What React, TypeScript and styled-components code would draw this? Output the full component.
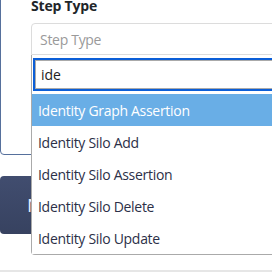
import React, { FC } from 'react';
import styled, { createGlobalStyle } from 'styled-components';

const GlobalStyle = createGlobalStyle`
  html, body {
    margin: 0;
    padding: 0;
    background: #ffffff;
    overflow: hidden;
  }
  body {
    font-family: 'Open Sans', 'Liberation Sans', sans-serif;
  }
`;

const Page = styled.div`
  width: 272px;
  height: 277px;
  overflow: hidden;
  position: relative;
`;

/* the view is scrolled: the top of the card is out of sight */
const Scroller = styled.div`
  margin-top: -24px;
`;

const Card = styled.div`
  width: 320px;
  box-sizing: border-box;
  border: 1px solid #56709c;
  border-radius: 4px;
  padding: 19px 0 99px 30px;
`;

const Field = styled.div`
  position: relative;
  width: 300px;
`;

const Label = styled.label`
  display: block;
  font-size: 14px;
  line-height: 20px;
  font-weight: 700;
  letter-spacing: -0.2px;
  color: #212529;
  margin-bottom: 7px;
`;

const SelectBox = styled.div`
  height: 32px;
  box-sizing: border-box;
  border: 1px solid #dcdcdc;
  border-radius: 4px 4px 0 0;
  padding: 0 8px;
  display: flex;
  align-items: center;
  font-size: 14px;
  letter-spacing: -0.3px;
  color: #9a9a9a;
`;

const Dropdown = styled.div`
  position: absolute;
  top: 100%;
  left: 0;
  right: 0;
  z-index: 10;
  background: #ffffff;
  border: 1px solid #aaaaaa;
  border-top: none;
  border-radius: 0 0 4px 4px;
`;

const SearchWrap = styled.div`
  padding: 5px 0 5px 3px;
`;

const SearchInput = styled.input`
  display: block;
  width: 100%;
  height: 29px;
  box-sizing: border-box;
  border: 1px solid #aaaaaa;
  outline: 2px solid #0b5ed7;
  padding: 0 5px;
  font-family: 'Open Sans', 'Liberation Sans', sans-serif;
  font-size: 14px;
  color: #222222;
  background: #ffffff;
`;

const Options = styled.ul`
  list-style: none;
  margin: 0;
  padding: 0;
`;

const Option = styled.li<{ $active?: boolean }>`
  height: 32px;
  display: flex;
  align-items: center;
  padding-left: 6px;
  font-size: 14px;
  letter-spacing: -0.3px;
  color: ${(p) => (p.$active ? '#ffffff' : '#2c3048')};
  background: ${(p) => (p.$active ? '#69aee6' : '#ffffff')};
`;

const ActionButton = styled.button`
  display: block;
  width: 220px;
  height: 58px;
  margin-top: 21px;
  border: none;
  border-radius: 4px;
  background: linear-gradient(#414d6f, #374260);
  color: #e8f0ff;
  font-family: 'Open Sans', 'Liberation Sans', sans-serif;
  font-size: 19px;
  text-align: left;
  padding: 0 0 0 27px;
`;

const Divider = styled.hr`
  margin: 36px 0 0;
  border: none;
  border-top: 2px solid #e6e6e6;
`;

const options = [
  'Identity Graph Assertion',
  'Identity Silo Add',
  'Identity Silo Assertion',
  'Identity Silo Delete',
  'Identity Silo Update',
];

const App: FC = () => (
  <Page>
    <GlobalStyle />
    <Scroller>
      <Card>
        <Field>
          <Label>Step Type</Label>
          <SelectBox>Step Type</SelectBox>
          <Dropdown>
            <SearchWrap>
              <SearchInput defaultValue='ide' />
            </SearchWrap>
            <Options>
              {options.map((o, i) => (
                <Option key={o} $active={i === 0}>
                  {o}
                </Option>
              ))}
            </Options>
          </Dropdown>
        </Field>
      </Card>
      <ActionButton>Next</ActionButton>
      <Divider />
    </Scroller>
  </Page>
);

export default App;
